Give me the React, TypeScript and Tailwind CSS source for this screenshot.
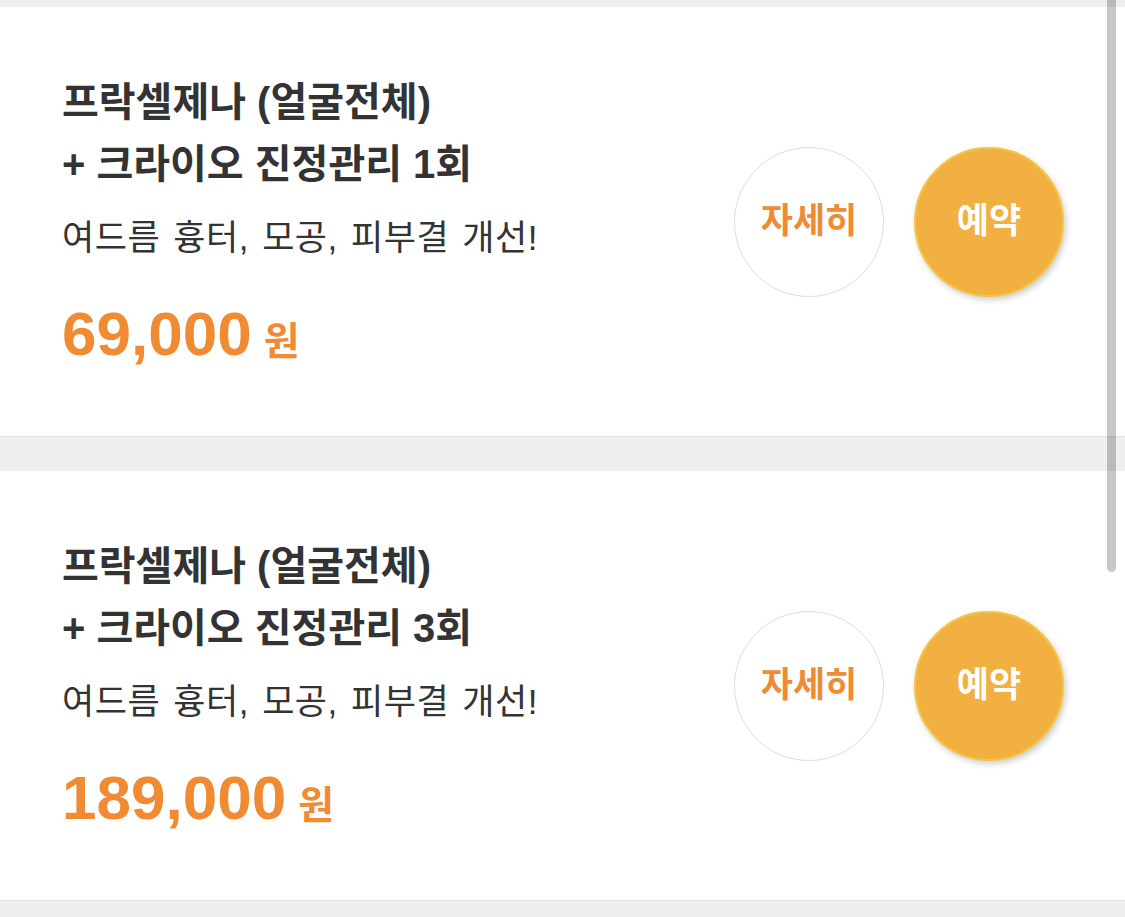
const ITEMS = [
  { title: "프락셀제나 (얼굴전체)", sub: "+ 크라이오 진정관리 1회", desc: "여드름 흉터, 모공, 피부결 개선!", price: "69,000" },
  { title: "프락셀제나 (얼굴전체)", sub: "+ 크라이오 진정관리 3회", desc: "여드름 흉터, 모공, 피부결 개선!", price: "189,000" },
];

const FONT = "font-['Liberation_Sans','Noto_Sans_CJK_KR',sans-serif]";

function ProductCard({ item }: { item: (typeof ITEMS)[number] }) {
  return (
    <div className="flex h-[430px] items-stretch justify-between border-b border-[#e4e4e4] bg-white pl-[62px] pr-[61px]">
      <div className="pt-[64px]">
        <p className="text-[40px] font-bold leading-[62px] text-[#333]">{item.title}</p>
        <p className="text-[40px] font-bold leading-[62px] text-[#333]">{item.sub}</p>
        <p className="mt-[21px] text-[35px] leading-[44px] tracking-[0.5px] text-[#333] [word-spacing:3px]">
          {item.desc}
        </p>
        <p className="mt-[44px] flex items-baseline leading-[60px] text-[#f08b33]">
          <span className="text-[62px] font-bold">{item.price}</span>
          <span className="ml-[12px] text-[39px] font-bold">원</span>
        </p>
      </div>
      <div className="flex items-center gap-[30px] self-center">
        <button className="flex h-[150px] w-[150px] items-center justify-center rounded-full border border-[#dedede] bg-white text-[35px] font-bold text-[#f08b33]">
          자세히
        </button>
        <button className="flex h-[150px] w-[150px] items-center justify-center rounded-full border-2 border-[#f5c53f] bg-[#f2b042] text-[35px] font-bold text-white shadow-[2px_3px_6px_rgba(0,0,0,0.2)]">
          예약
        </button>
      </div>
    </div>
  );
}

export default function App() {
  return (
    <div className={`relative h-[917px] overflow-hidden bg-[#efefef] pt-[7px] ${FONT}`}>
      <ProductCard item={ITEMS[0]} />
      <div className="h-[34px]" />
      <ProductCard item={ITEMS[1]} />
      <div className="absolute right-[9px] top-0 h-[572px] w-[9px] rounded-b-full bg-black/[0.22]" />
    </div>
  );
}
